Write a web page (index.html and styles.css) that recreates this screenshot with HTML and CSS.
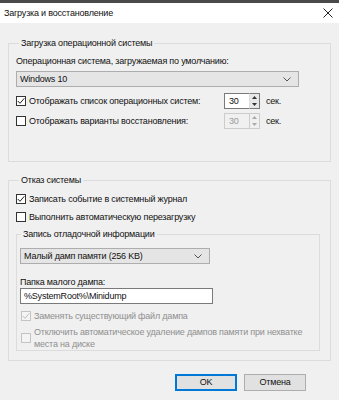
FILE: index.html
```html
<!doctype html>
<html>
  <head>
    <title>Загрузка и восстановление</title>
    <meta charset="utf-8">
    <link rel="stylesheet" href="styles.css">
  </head>
  <body>
    <div class="window">
      <div class="topstrip"></div>
      <div class="titlebar">
        <span class="title">Загрузка и восстановление</span>
        <svg class="close" width="10" height="10" viewBox="0 0 10 10"><path d="M0.5 0.5L9.5 9.5M9.5 0.5L0.5 9.5" stroke="#222" stroke-width="1"/></svg>
      </div>

      <div class="content">

        <fieldset class="group group-boot">
          <legend>Загрузка операционной системы</legend>
          <div class="label">Операционная система, загружаемая по умолчанию:</div>
          <div class="select select-os">
            <span>Windows 10</span>
            <svg width="8" height="5" viewBox="0 0 8 5"><path d="M0.5 0.5L4 4L7.5 0.5" fill="none" stroke="#555" stroke-width="1"/></svg>
          </div>

          <div class="row">
            <div class="check-line">
              <span class="checkbox checked"><svg width="8" height="8" viewBox="0 0 8 8"><path d="M0.8 4L3 6.3L7.3 1.3" fill="none" stroke="#222" stroke-width="1"/></svg></span>
              <span>Отображать список операционных систем:</span>
            </div>
            <div class="spin">
              <div class="spin-input">30</div>
              <div class="spin-btns">
                <div class="spin-btn"><svg width="5" height="3" viewBox="0 0 5 3"><path d="M0 3L2.5 0L5 3Z" fill="#333"/></svg></div>
                <div class="spin-btn"><svg width="5" height="3" viewBox="0 0 5 3"><path d="M0 0L2.5 3L5 0Z" fill="#333"/></svg></div>
              </div>
            </div>
            <span class="unit">сек.</span>
          </div>

          <div class="row">
            <div class="check-line">
              <span class="checkbox"></span>
              <span>Отображать варианты восстановления:</span>
            </div>
            <div class="spin disabled">
              <div class="spin-input">30</div>
              <div class="spin-btns">
                <div class="spin-btn"><svg width="5" height="3" viewBox="0 0 5 3"><path d="M0 3L2.5 0L5 3Z" fill="#aaa"/></svg></div>
                <div class="spin-btn"><svg width="5" height="3" viewBox="0 0 5 3"><path d="M0 0L2.5 3L5 0Z" fill="#aaa"/></svg></div>
              </div>
            </div>
            <span class="unit">сек.</span>
          </div>
        </fieldset>

        <fieldset class="group group-fail">
          <legend>Отказ системы</legend>
          <div class="check-line line-a">
            <span class="checkbox checked"><svg width="8" height="8" viewBox="0 0 8 8"><path d="M0.8 4L3 6.3L7.3 1.3" fill="none" stroke="#222" stroke-width="1"/></svg></span>
            <span>Записать событие в системный журнал</span>
          </div>
          <div class="check-line line-b">
            <span class="checkbox"></span>
            <span>Выполнить автоматическую перезагрузку</span>
          </div>

          <fieldset class="group group-debug">
            <legend>Запись отладочной информации</legend>
            <div class="select select-dump">
              <span>Малый дамп памяти (256 KB)</span>
              <svg width="8" height="5" viewBox="0 0 8 5"><path d="M0.5 0.5L4 4L7.5 0.5" fill="none" stroke="#555" stroke-width="1"/></svg>
            </div>
            <div class="label label-folder">Папка малого дампа:</div>
            <div class="textbox">%SystemRoot%\Minidump</div>

            <div class="check-line disabled line-c">
              <span class="checkbox"><svg width="8" height="8" viewBox="0 0 8 8"><path d="M0.8 4L3 6.3L7.3 1.3" fill="none" stroke="#bdbdbd" stroke-width="1"/></svg></span>
              <span>Заменять существующий файл дампа</span>
            </div>
            <div class="check-line disabled two-lines">
              <span class="checkbox"></span>
              <span>Отключить автоматическое удаление дампов памяти при нехватке места на диске</span>
            </div>
          </fieldset>
        </fieldset>

        <div class="buttons">
          <div class="button default">OK</div>
          <div class="button">Отмена</div>
        </div>
      </div>
    </div>
  </body>
</html>
```
FILE: styles.css
```css
html, body {
  margin: 0;
  padding: 0;
  width: 339px;
  height: 400px;
  overflow: hidden;
  font-family: "Liberation Sans", Arial, sans-serif;
  font-size: 9px;
  letter-spacing: -0.2px;
  color: #111111;
}

.window {
  height: 400px;
  display: flex;
  flex-direction: column;
  background-color: #f0f0f0;
}

.topstrip {
  height: 3px;
  background-color: #4a4a4a;
}

.titlebar {
  height: 20px;
  background-color: #ffffff;
  display: flex;
  align-items: center;
  justify-content: space-between;
  padding: 0 6px 0 4px;
}

.content {
  flex: 1;
  padding: 13px 8px 0 8px;
}

.group {
  border: 1px solid #dcdcdc;
  margin: 0;
  padding: 0 7px;
}
.group legend {
  padding: 0 2px;
  margin-left: 3px;
  line-height: 14px;
}

.group-boot {
  height: 126px;
  box-sizing: border-box;
}
.label {
  margin-top: 5px;
  line-height: 12px;
}
.select {
  height: 16px;
  box-sizing: border-box;
  background-color: #e5e5e5;
  border: 1px solid #adadad;
  display: flex;
  align-items: center;
  justify-content: space-between;
  padding: 0 7px 0 3px;
  margin-top: 4px;
}
.select-os {
  width: 283px;
}

.row {
  display: flex;
  align-items: center;
  margin-top: 6px;
  height: 16px;
}
.row + .row {
  margin-top: 4px;
}
.row .check-line {
  width: 208px;
}

.check-line {
  display: flex;
  align-items: center;
  gap: 3px;
  white-space: nowrap;
}
.checkbox {
  width: 8px;
  height: 8px;
  border: 1px solid #333333;
  background-color: #ffffff;
  flex: none;
  display: flex;
  align-items: center;
  justify-content: center;
}
.checkbox svg {
  display: block;
}

.spin {
  display: flex;
  height: 16px;
}
.spin-input {
  width: 25px;
  box-sizing: border-box;
  border: 1px solid #7a7a7a;
  border-right: none;
  background-color: #ffffff;
  padding-left: 4px;
  line-height: 14px;
}
.spin-btns {
  width: 11px;
  box-sizing: border-box;
  border: 1px solid #7a7a7a;
  border-left-color: #dcdcdc;
  background-color: #ffffff;
  display: flex;
  flex-direction: column;
}
.spin-btn {
  flex: 1;
  display: flex;
  align-items: center;
  justify-content: center;
  background-color: #e8e8e8;
}
.spin.disabled .spin-input,
.spin.disabled .spin-btns {
  border-color: #cccccc;
  background-color: #f0f0f0;
  color: #9a9a9a;
}
.spin.disabled .spin-btn {
  background-color: #f0f0f0;
}
.unit {
  margin-left: 6px;
}

.group-fail {
  margin-top: 11px;
  padding-bottom: 9px;
}
.line-a {
  margin-top: 4px;
  height: 16px;
}
.line-b {
  margin-top: 2px;
  height: 16px;
}

.group-debug {
  margin: 2px 3px 0 0;
  padding: 0 4px 0 3px;
}
.group-debug legend {
  margin-left: 1px;
}
.select-dump {
  width: 190px;
  margin-top: 7px;
}
.label-folder {
  margin-top: 12px;
}
.textbox {
  width: 193px;
  height: 16px;
  box-sizing: border-box;
  border: 1px solid #7a7a7a;
  background-color: #ffffff;
  padding-left: 3px;
  line-height: 14px;
  margin-top: 0;
}

.check-line.disabled {
  color: #8f8f8f;
  padding-left: 1px;
}
.check-line.disabled .checkbox {
  border-color: #c4c4c4;
  background-color: #f4f4f4;
}
.line-c {
  margin-top: 5px;
  height: 14px;
}
.two-lines {
  margin-top: 3px;
  line-height: 12px;
  white-space: normal;
}

.buttons {
  display: flex;
  justify-content: flex-end;
  gap: 7px;
  padding: 13px 25px 0 0;
}
.button {
  width: 62px;
  height: 17px;
  box-sizing: border-box;
  border: 1px solid #adadad;
  background-color: #e1e1e1;
  text-align: center;
  line-height: 15px;
}
.button.default {
  border: 2px solid #0078d7;
  line-height: 13px;
}
```
